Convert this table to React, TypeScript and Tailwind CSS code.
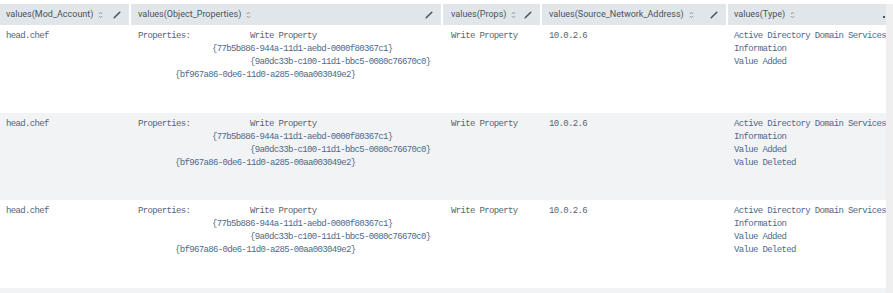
import React from "react";

const COLS = [
  { key: "acct", title: "values(Mod_Account)", w: "w-[131px]", pad: "pl-[6px]" },
  { key: "obj", title: "values(Object_Properties)", w: "w-[312px]", pad: "pl-[7px]" },
  { key: "props", title: "values(Props)", w: "w-[99px]", pad: "pl-[8px]" },
  { key: "addr", title: "values(Source_Network_Address)", w: "w-[186px]", pad: "pl-[7px]" },
  { key: "type", title: "values(Type)", w: "w-[158px]", pad: "pl-[6px]" },
];

const ROWS = [
  { h: "h-[88px]", bg: "bg-white", types: ["Active Directory Domain Services", "Information", "Value Added"] },
  { h: "h-[87px]", bg: "bg-[#f2f3f5]", types: ["Active Directory Domain Services", "Information", "Value Added", "Value Deleted"] },
  { h: "h-[88px]", bg: "bg-white", types: ["Active Directory Domain Services", "Information", "Value Added", "Value Deleted"] },
];

function SortIcon() {
  return (
    <svg width="5" height="8" viewBox="0 0 5 8" className="ml-[5px] inline-block">
      <path d="M0.8 3 L2.5 1.2 L4.2 3" fill="none" stroke="#8a939c" strokeWidth="0.9" />
      <path d="M0.8 5 L2.5 6.8 L4.2 5" fill="none" stroke="#8a939c" strokeWidth="0.9" />
    </svg>
  );
}

function Pencil() {
  return (
    <svg width="8" height="8" viewBox="0 0 8 8" className="absolute right-[8px] top-[7px]">
      <path d="M1.2 6.8 L6.8 1.2" stroke="#4a535c" strokeWidth="1.5" strokeLinecap="round" />
    </svg>
  );
}

const mono = "font-['Liberation_Mono',monospace] text-[9px] tracking-[-0.65px] leading-[13px] text-[#5a6470]";
const blue = "text-[#4e6a8c]";

export default function App() {
  return (
    <div className="w-[893px] h-[293px] overflow-hidden bg-white pt-[4px] flex">
      <div className="w-[886px]">
        {/* header */}
        <div className="flex h-[21px] bg-[#e1e6eb] font-['Roboto',sans-serif] text-[9px] text-[#4a535c]">
          {COLS.map((c, i) => (
            <div
              key={c.key}
              className={`${c.w} ${c.pad} relative flex items-center ${i < COLS.length - 1 ? "border-r-2 border-white" : ""}`}
            >
              <span>{c.title}</span>
              <SortIcon />
              {i < COLS.length - 1 ? <Pencil /> : <span className="absolute right-[1px] top-[12px] w-[2px] h-[2px] bg-[#4a535c]" />}
            </div>
          ))}
        </div>
        {/* rows */}
        {ROWS.map((r, ri) => (
          <div key={ri} className={`flex ${r.h} ${r.bg} pt-[5px] ${mono}`}>
            <div className="w-[131px] pl-[6px]">head.chef</div>
            <div className="w-[312px] pl-[7px]">
              <div>
                <span className="inline-block w-[112px]">Properties:</span>
                <span>Write Property</span>
              </div>
              <div className={`ml-[74px] ${blue}`}>{"{77b5b886-944a-11d1-aebd-0000f80367c1}"}</div>
              <div className={`ml-[112px] ${blue}`}>{"{9a0dc33b-c100-11d1-bbc5-0080c76670c0}"}</div>
              <div className={`ml-[37px] ${blue}`}>{"{bf967a86-0de6-11d0-a285-00aa003049e2}"}</div>
            </div>
            <div className="w-[99px] pl-[8px]">Write Property</div>
            <div className="w-[186px] pl-[7px]">10.0.2.6</div>
            <div className={`w-[158px] pl-[6px] whitespace-nowrap ${blue}`}>
              {r.types.map((t) => (
                <div key={t}>{t}</div>
              ))}
            </div>
          </div>
        ))}
        <div className="h-[10px] bg-[#f2f3f5]" />
      </div>
      <div className="flex-1 bg-[#efefef]" />
    </div>
  );
}
